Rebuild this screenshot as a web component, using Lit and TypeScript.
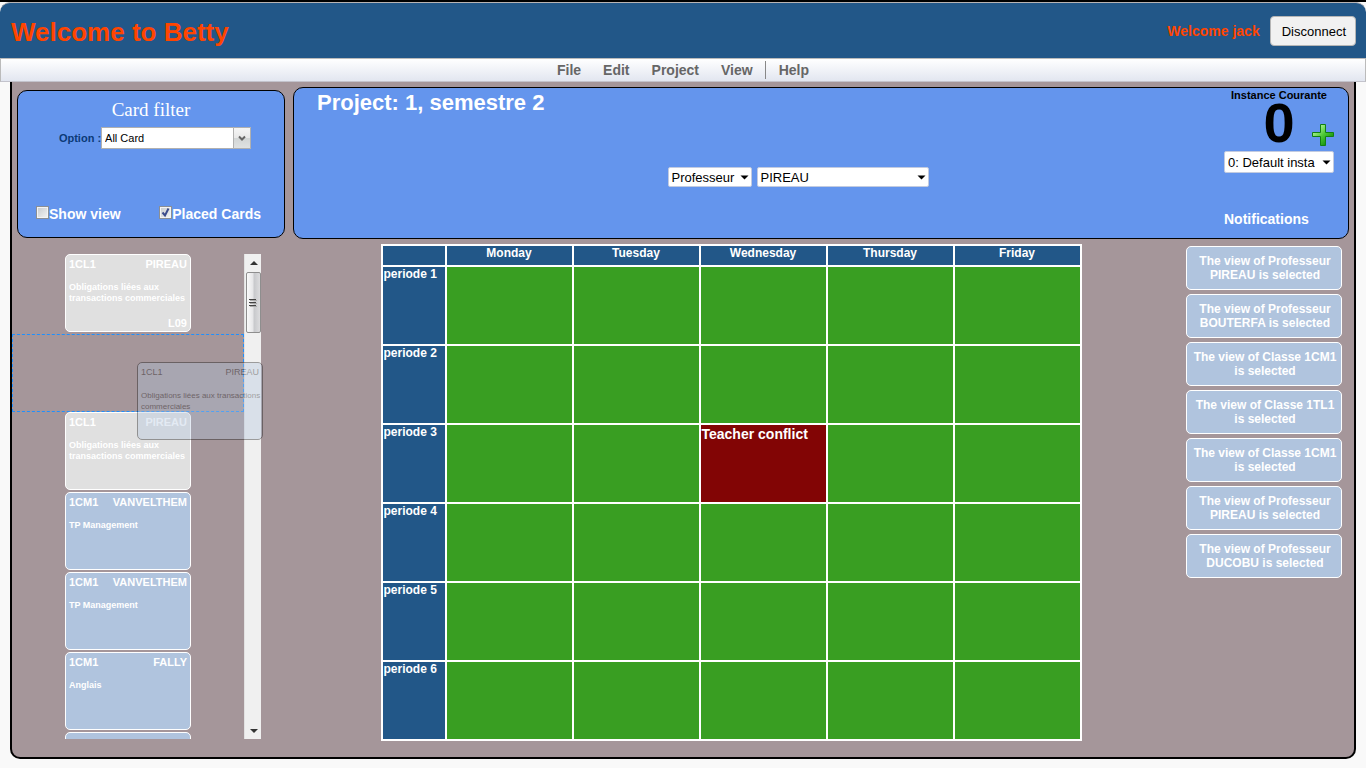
import { LitElement, html, css, svg, nothing } from "lit";
import { customElement, property } from "lit/decorators.js";
import { classMap } from "lit/directives/class-map.js";

interface Card {
  group: string;
  teacher: string;
  course: string;
  room?: string;
  placed?: boolean;
}

const FIRST: Card = {
  group: "1CL1",
  teacher: "PIREAU",
  course: "Obligations liées aux transactions commerciales",
  room: "L09",
  placed: true,
};

const CARDS: Card[] = [
  { ...FIRST, room: undefined },
  { group: "1CM1", teacher: "VANVELTHEM", course: "TP Management" },
  { group: "1CM1", teacher: "VANVELTHEM", course: "TP Management" },
  { group: "1CM1", teacher: "FALLY", course: "Anglais" },
  { group: "", teacher: "", course: "" },
];

const DAYS = ["Monday", "Tuesday", "Wednesday", "Thursday", "Friday"];
const PERIODS = [1, 2, 3, 4, 5, 6];
const NOTICES = [
  "Professeur PIREAU",
  "Professeur BOUTERFA",
  "Classe 1CM1",
  "Classe 1TL1",
  "Classe 1CM1",
  "Professeur PIREAU",
  "Professeur DUCOBU",
];

@customElement("course-card")
export class CourseCard extends LitElement {
  @property({ attribute: false }) card!: Card;
  @property({ type: Boolean, reflect: true }) ghost = false;

  static styles = css`
    :host {
      display: block;
      flex: none;
      width: 126px;
    }
    .card {
      box-sizing: border-box;
      display: flex;
      flex-direction: column;
      height: 78px;
      padding: 3px 3px 2px;
      border: 1px solid #fff;
      border-radius: 5px;
      background: #b0c4de;
      color: #fff;
      font-weight: bold;
      font-size: 11px;
      line-height: 12px;
    }
    .placed {
      background: #e0e0e0;
    }
    .ghost {
      padding-right: 1px;
      background: #b0c4de;
      border-color: #000;
      color: #000;
      font-weight: normal;
      font-size: 9px;
      opacity: 0.35;
    }
    .head {
      display: flex;
      justify-content: space-between;
    }
    .course {
      margin-top: 12px;
      font-size: 9px;
      line-height: 11px;
    }
    .ghost .head {
      padding-right: 2px;
    }
    .ghost .course {
      font-size: 8px;
    }
    .room {
      margin-top: auto;
      text-align: right;
    }
  `;

  render() {
    const c = this.card;
    return html`<article
      class=${classMap({ card: true, placed: !!c.placed, ghost: this.ghost })}
    >
      <div class="head"><span>${c.group}</span><span>${c.teacher}</span></div>
      <div class="course">${c.course}</div>
      ${c.room && !this.ghost ? html`<div class="room">${c.room}</div>` : nothing}
    </article>`;
  }
}

@customElement("app-root")
export class AppRoot extends LitElement {
  static styles = css`
    :host {
      display: flex;
      flex-direction: column;
      box-sizing: border-box;
      height: 100vh;
      min-height: 768px;
      padding-bottom: 9px;
      border-top: 2px solid #000;
      background: #f9f9f9;
      font-family: "Liberation Sans", Arial, sans-serif;
      font-size: 13px;
    }
    header {
      display: flex;
      align-items: center;
      justify-content: space-between;
      box-sizing: border-box;
      height: 56px;
      padding: 1px 10px 0 11px;
      border-top: 1px solid #b9b4b4;
      border-radius: 10px 10px 0 0;
      background: #225788;
      color: #ff4500;
    }
    h1 {
      margin: 0;
      padding-top: 2px;
      font-size: 26px;
      font-weight: bold;
    }
    .user {
      display: flex;
      align-items: center;
      gap: 10px;
      font-size: 14px;
      font-weight: bold;
    }
    .disconnect {
      height: 30px;
      padding: 0 9px 0 11px;
      border: 1px solid #b5b5b5;
      border-radius: 4px;
      background: #f1f1f1;
      color: #000;
      font: 13px "Liberation Sans", Arial, sans-serif;
    }
    nav {
      display: flex;
      align-items: center;
      justify-content: center;
      box-sizing: border-box;
      height: 24px;
      border: 1px solid #bbb;
      border-bottom-color: #c3c3cc;
      background: linear-gradient(#fff, #e2e6f0);
    }
    nav a {
      padding: 0 11px;
      color: #666;
      font-size: 14px;
      font-weight: bold;
      line-height: 18px;
      text-decoration: none;
    }
    nav a:last-child {
      margin-left: 1px;
      padding-left: 13px;
      border-left: 1px solid #888;
    }
    main {
      flex: 1;
      display: flex;
      flex-direction: column;
      min-height: 0;
      margin: 0 10px;
      border: 2px solid #000;
      border-top: 0;
      border-radius: 0 0 10px 10px;
      background: #a5969a;
    }
    .panels {
      display: flex;
      gap: 8px;
      padding: 5px 5px 0;
    }
    .panel {
      box-sizing: border-box;
      border: 1px solid #000;
      border-radius: 10px;
      background: #6495ed;
      color: #fff;
    }
    .filter {
      display: flex;
      flex-direction: column;
      align-items: center;
      width: 268px;
      margin: 3px 0 1px;
      padding: 9px 18px 15px;
    }
    h2 {
      margin: 0 0 7px;
      font: 19px/20px "Liberation Serif", serif;
    }
    .option {
      display: flex;
      align-items: center;
      padding-left: 8px;
      color: #0b3a77;
      font-size: 11px;
      font-weight: bold;
    }
    .picker {
      position: relative;
      display: inline-flex;
    }
    select {
      appearance: none;
      box-sizing: border-box;
      width: 100%;
      margin: 0;
      padding: 0 14px 0 3px;
      border: 1px solid #c2cbe0;
      border-radius: 2px;
      background: #fff;
      color: #000;
      font: 13px "Liberation Sans", Arial, sans-serif;
      height: 20px;
    }
    .arrow {
      position: absolute;
      right: 3px;
      top: 50%;
      margin-top: -2px;
      pointer-events: none;
    }
    .combo {
      width: 150px;
    }
    .combo select {
      height: 22px;
      border: 1px solid #b0b0b0;
      border-radius: 0;
      font-size: 11px;
    }
    .trigger {
      position: absolute;
      right: 0;
      top: 0;
      pointer-events: none;
    }
    .checks {
      display: flex;
      justify-content: space-between;
      align-self: stretch;
      margin-top: auto;
      padding-right: 5px;
      font-size: 14px;
      font-weight: bold;
    }
    .checks label {
      display: flex;
      align-items: center;
    }
    .checks input {
      appearance: none;
      width: 13px;
      height: 13px;
      margin: 0 0 3px;
      border: 1px solid #8b8f94;
      outline: 1px solid #f4f4f4;
      outline-offset: -2px;
      background: linear-gradient(135deg, #c6cacd, #f4f5f5);
    }
    .check {
      position: relative;
      display: flex;
    }
    .check svg {
      position: absolute;
      left: 0;
      top: 0;
      pointer-events: none;
    }
    .project {
      flex: 1;
      display: flex;
      height: 152px;
      padding: 2px 14px 0 23px;
    }
    .subject {
      flex: 1;
    }
    h3 {
      margin: 0;
      font-size: 22px;
      line-height: 26px;
      font-weight: bold;
    }
    .views {
      display: flex;
      justify-content: center;
      gap: 5px;
      margin-top: 51px;
      padding-left: 55px;
    }
    .kind {
      width: 84px;
    }
    .who {
      width: 172px;
    }
    .instance {
      width: 110px;
      display: flex;
      flex-direction: column;
    }
    .caption {
      color: #000;
      font-size: 11px;
      line-height: 10px;
      font-weight: bold;
      text-align: center;
    }
    .count {
      display: grid;
      grid-template-columns: 1fr auto 1fr;
      align-items: end;
      height: 46px;
      margin-bottom: 5px;
      color: #000;
      font-size: 56px;
      font-weight: bold;
      line-height: 46px;
    }
    .count output {
      grid-column: 2;
    }
    .add {
      display: flex;
      justify-self: end;
      padding: 0;
      border: 0;
      background: none;
    }
    .instance select {
      height: 22px;
      padding-right: 18px;
    }
    .label {
      margin-top: 37px;
      font-size: 14px;
      line-height: 18px;
      font-weight: bold;
    }
    .work {
      flex: 1;
      display: grid;
      grid-template: minmax(0, 1fr) / 273px 1fr 177px;
      min-height: 0;
    }
    .deck {
      position: relative;
      display: flex;
      width: 249px;
      margin: 15px 0 18px;
    }
    .cards {
      flex: 1;
      display: flex;
      flex-direction: column;
      align-items: center;
      gap: 2px;
      overflow: hidden;
    }
    .slot {
      flex: none;
      box-sizing: border-box;
      width: 100%;
      height: 78px;
      margin-bottom: -2px;
      border: 1px dashed #1e90ff;
    }
    .dragged {
      position: absolute;
      left: 125px;
      top: 108px;
    }
    .bar {
      display: flex;
      flex-direction: column;
      align-items: center;
      box-sizing: border-box;
      width: 17px;
      border-left: 1px solid #e2e2e2;
      background: #f0f0f0;
    }
    .bar svg {
      flex: none;
    }
    .thumb {
      display: flex;
      align-items: center;
      justify-content: center;
      box-sizing: border-box;
      width: 15px;
      height: 61px;
      border: 1px solid #8e8e8e;
      border-radius: 2px;
      background: linear-gradient(90deg, #fafafa, #e6e6e8 45%, #c8c9cc 55%, #dcdcde);
    }
    .down {
      margin-top: auto;
    }
    table {
      width: 701px;
      max-width: 100%;
      margin: 5px auto 0;
      border-spacing: 2px;
      table-layout: fixed;
      background: #fff;
      color: #fff;
      align-self: start;
    }
    th,
    td {
      padding: 0;
      vertical-align: top;
    }
    th {
      height: 19px;
      background: #225788;
      font-size: 12px;
      line-height: 15px;
    }
    .corner {
      width: 62px;
    }
    tbody th {
      height: 77px;
      padding-left: 1px;
      text-align: left;
    }
    td {
      padding-left: 1px;
      background: #399e22;
      font-size: 14px;
      line-height: 18px;
      font-weight: bold;
    }
    .conflict {
      background: #820505;
    }
    .notices {
      display: flex;
      flex-direction: column;
      gap: 4px;
      width: 156px;
      margin: 7px 0 0 9px;
      padding: 0;
      list-style: none;
    }
    .notices li {
      box-sizing: border-box;
      min-height: 44px;
      padding: 7px 4px 7px 6px;
      border: 1px solid #fff;
      border-radius: 5px;
      background: #b0c4de;
      color: #fff;
      font-size: 12px;
      line-height: 14px;
      font-weight: bold;
      text-align: center;
    }
  `;

  private arrow() {
    return html`<svg class="arrow" width="9" height="5" viewBox="0 0 9 5" aria-hidden="true">
      <path d="M.5.500h8L4.500 4.500z" fill="#000" />
    </svg>`;
  }

  private stepper(up: boolean) {
    return html`<svg class=${up ? "up" : "down"} width="15" height="18" viewBox="0 0 15 18" aria-hidden="true">
      ${up ? svg`<path d="M4 11h8L8 7z" fill="#333" />` : svg`<path d="M4 8h8L8 12z" fill="#333" />`}
    </svg>`;
  }

  render() {
    return html`
      <header>
        <h1>Welcome to Betty</h1>
        <div class="user">
          <span>Welcome jack</span>
          <button class="disconnect">Disconnect</button>
        </div>
      </header>
      <nav>
        ${["File", "Edit", "Project", "View", "Help"].map((m) => html`<a href="#">${m}</a>`)}
      </nav>
      <main>
        <div class="panels">
          <section class="panel filter">
            <h2>Card filter</h2>
            <div class="option">
              <label for="option">Option :</label>
              <span class="picker combo">
                <select id="option"><option>All Card</option></select>
                <svg class="trigger" width="18" height="22" viewBox="0 0 18 22" aria-hidden="true">
                  <defs>
                    <linearGradient id="btn" x2="0" y2="1">
                      <stop offset="0" stop-color="#f6f6f6" />
                      <stop offset=".5" stop-color="#e8e8e8" />
                      <stop offset=".5" stop-color="#d2d5d5" />
                      <stop offset="1" stop-color="#e0e2e2" />
                    </linearGradient>
                  </defs>
                  <path d="M.5.5h17v21H.5z" fill="url(#btn)" stroke="#b0b0b0" />
                  <path d="M6 9.500l3 3L12 9.500" fill="none" stroke="#666" stroke-width="2" />
                </svg>
              </span>
            </div>
            <div class="checks">
              <label><span class="check"><input type="checkbox" /></span>Show view</label>
              <label
                ><span class="check"
                  ><input type="checkbox" checked /><svg width="13" height="13" viewBox="0 0 13 13" aria-hidden="true">
                    <path d="M3.500 6.500l2.500 3L9.500 2.500" fill="none" stroke="#3c4c8c" stroke-width="2" /></svg></span
                >Placed Cards</label
              >
            </div>
          </section>
          <section class="panel project">
            <div class="subject">
              <h3>Project: 1, semestre 2</h3>
              <div class="views">
                <span class="picker kind">
                  <select aria-label="View type"><option>Professeur</option></select>${this.arrow()}
                </span>
                <span class="picker who">
                  <select aria-label="View of"><option>PIREAU</option></select>${this.arrow()}
                </span>
              </div>
            </div>
            <div class="instance">
              <label class="caption" for="instance">Instance Courante</label>
              <div class="count">
                <output>0</output>
                <button class="add" aria-label="Add instance">
                  <svg width="22" height="22" viewBox="0 0 22 22" aria-hidden="true">
                    <defs>
                      <linearGradient id="plus" x2="1" y2="1">
                        <stop offset="0.2" stop-color="#a6f08c" />
                        <stop offset="0.5" stop-color="#4cc835" />
                        <stop offset="0.8" stop-color="#17930d" />
                      </linearGradient>
                    </defs>
                    <path
                      d="M8.5.5h5v8h8v4h-8v9h-5v-9h-8v-4h8z"
                      fill="url(#plus)"
                      stroke="#128012"
                    />
                  </svg>
                </button>
              </div>
              <span class="picker">
                <select id="instance"><option>0: Default instance</option></select>${this.arrow()}
              </span>
              <span class="label">Notifications</span>
            </div>
          </section>
        </div>
        <div class="work">
          <div class="deck">
            <div class="cards">
              <course-card .card=${FIRST}></course-card>
              <div class="slot"></div>
              ${CARDS.map((c) => html`<course-card .card=${c}></course-card>`)}
            </div>
            <div class="bar">
              ${this.stepper(true)}
              <div class="thumb">
                <svg width="8" height="9" viewBox="0 0 8 9" aria-hidden="true">
                  <path d="M0 1.500h7M0 4.500h7M0 7.500h7" stroke="#444" />
                  <path d="M1 2.500h7M1 5.500h7M1 8.500h7" stroke="#aaa" />
                </svg>
              </div>
              ${this.stepper(false)}
            </div>
            <course-card class="dragged" ghost .card=${FIRST}></course-card>
          </div>
          <table>
            <thead>
              <tr>
                <th class="corner"></th>
                ${DAYS.map((d) => html`<th scope="col">${d}</th>`)}
              </tr>
            </thead>
            <tbody>
              ${PERIODS.map(
                (p) => html`<tr>
                  <th scope="row">${`periode ${p}`}</th>
                  ${DAYS.map((d) =>
                    p === 3 && d === "Wednesday"
                      ? html`<td class="conflict">Teacher conflict</td>`
                      : html`<td></td>`
                  )}
                </tr>`
              )}
            </tbody>
          </table>
          <ul class="notices">
            ${NOTICES.map((n) => html`<li>${`The view of ${n} is selected`}</li>`)}
          </ul>
        </div>
      </main>
    `;
  }
}
